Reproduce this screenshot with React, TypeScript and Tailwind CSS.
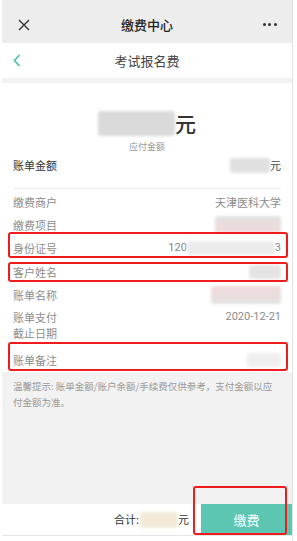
import React from "react";

const Blur = ({ w, h, cls = "" }: { w: number; h: number; cls?: string }) => (
  <div
    className={"rounded-[3px] blur-[1.5px] " + cls}
    style={{ width: w, height: h }}
  />
);

const Row = ({
  label,
  h,
  children,
}: {
  label: React.ReactNode;
  h: string;
  children?: React.ReactNode;
}) => (
  <div className={"flex items-center justify-between px-[11px] " + h}>
    <div className="text-[11px] leading-[16px] text-[#8c8c8c]">{label}</div>
    <div className="flex items-center text-[11px] text-[#8c8c8c]">{children}</div>
  </div>
);

export default function App() {
  return (
    <div
      className="relative w-[297px] h-[541px] overflow-hidden bg-white"
      style={{ fontFamily: '"Noto Sans CJK SC", "Noto Sans", sans-serif' }}
    >
      <div className="ml-[2px] w-[291px] h-full flex flex-col bg-[#f2f2f2] border-r border-[#e2e2e2]">
        {/* title bar */}
        <div className="h-[43px] bg-[#ededed] flex items-center justify-between px-[13px] pt-[6px]">
          <svg width="14" height="14" viewBox="0 0 14 14" className="ml-[2px]">
            <path d="M2 2 L12 12 M12 2 L2 12" stroke="#333" strokeWidth="1.4" />
          </svg>
          <div className="text-[13px] font-medium text-[#222]">缴费中心</div>
          <div className="flex gap-[2.5px] mr-[2px]">
            <span className="w-[3px] h-[3px] rounded-full bg-[#333]" />
            <span className="w-[3px] h-[3px] rounded-full bg-[#333]" />
            <span className="w-[3px] h-[3px] rounded-full bg-[#333]" />
          </div>
        </div>
        {/* nav */}
        <div className="relative h-[35px] bg-white flex items-center justify-center">
          <svg width="8" height="13" viewBox="0 0 8 13" className="absolute left-[11px] top-[11px]">
            <path d="M6.5 1 L1.5 6.5 L6.5 12" stroke="#4fc3ad" strokeWidth="1.8" fill="none" />
          </svg>
          <div className="text-[13px] text-[#444]">考试报名费</div>
        </div>
        <div className="h-[5px] bg-[#f2f2f2]" />
        {/* content */}
        <div className="bg-white flex flex-col">
          <div className="flex items-center justify-center pt-[27px] h-[53px]">
            <Blur w={77} h={25} cls="bg-[#dadada]" />
            <span className="text-[21px] leading-[26px] font-medium text-[#333]">元</span>
          </div>
          <div className="mt-[5px] text-center text-[9px] leading-[12px] text-[#999]">应付金额</div>
          <div className="mt-[4px] flex items-center justify-between px-[11px] h-[16px]">
            <div className="text-[11px] text-[#333]">账单金额</div>
            <div className="flex items-center">
              <Blur w={40} h={15} cls="bg-[#e0e0e0]" />
              <span className="text-[11px] text-[#444]">元</span>
            </div>
          </div>
          <div className="mt-[15px] mx-[11px] h-px bg-[#ececec]" />
          <div className="h-[2px]" />
          <Row label="缴费商户" h="h-[22px]">
            天津医科大学
          </Row>
          <Row label="缴费项目" h="h-[23px]">
            <Blur w={66} h={17} cls="bg-gradient-to-b from-[#e2e2e2] to-[#f0d8d8]" />
          </Row>
          <Row label="身份证号" h="h-[24px]">
            <span className="text-[#888]" style={{ fontFamily: "Roboto, sans-serif" }}>120</span>
            <Blur w={88} h={14} cls="bg-[#ececec]" />
            <span className="text-[#888]" style={{ fontFamily: "Roboto, sans-serif" }}>3</span>
          </Row>
          <Row label="客户姓名" h="h-[23px]">
            <Blur w={32} h={14} cls="bg-[#e4e4e4]" />
          </Row>
          <Row label="账单名称" h="h-[23px]">
            <Blur w={70} h={18} cls="bg-gradient-to-b from-[#f1d8d8] to-[#e2e2e2]" />
          </Row>
          <div className="flex items-start justify-between px-[11px] pt-[3px] pb-[6px]">
            <div className="text-[11px] leading-[16px] text-[#8c8c8c]">
              账单支付
              <br />
              截止日期
            </div>
            <div
              className="text-[11px] leading-[16px] text-[#8c8c8c]"
              style={{ fontFamily: "Roboto, sans-serif" }}
            >
              2020-12-21
            </div>
          </div>
          <Row label="账单备注" h="h-[25px]">
            <Blur w={34} h={14} cls="bg-[#efefef]" />
          </Row>
        </div>
        {/* notice */}
        <div className="px-[11px] pt-[6px] text-[9.5px] leading-[16px] text-[#999]">
          温馨提示: 账单金额/账户余额/手续费仅供参考，支付金额以应
          <br />
          付金额为准。
        </div>
        <div className="flex-1" />
        {/* bottom bar */}
        <div className="h-[31px] bg-white flex items-center justify-end">
          <span className="text-[11px] text-[#333]">合计:</span>
          <Blur w={38} h={16} cls="bg-[#f3ebd8] ml-[1px]" />
          <span className="text-[11px] text-[#333] mr-[12px]">元</span>
          <div className="w-[91px] h-full bg-[#5cc6b3] flex items-center justify-center text-[13px] text-white">
            缴费
          </div>
        </div>
        <div className="h-px bg-[#e6e6e6]" />
        <div className="h-[5px] bg-white" />
      </div>

      {/* annotation boxes */}
      <div className="absolute left-[8px] top-[232px] w-[280px] h-[26px] border-2 border-[#ee1c1c] rounded-[3px]" />
      <div className="absolute left-[8px] top-[262px] w-[280px] h-[20px] border-2 border-[#ee1c1c] rounded-[3px]" />
      <div className="absolute left-[8px] top-[342px] w-[280px] h-[29px] border-2 border-[#ee1c1c] rounded-[3px]" />
      <div className="absolute left-[193px] top-[486px] w-[94px] h-[49px] border-2 border-[#ee1c1c] rounded-[3px]" />
    </div>
  );
}
